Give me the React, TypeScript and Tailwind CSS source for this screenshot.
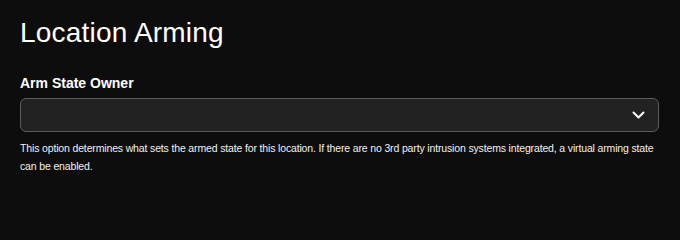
export default function App() {
  return (
    <div className="min-h-screen bg-[#0d0d0d] px-5 pt-4 text-white font-['Liberation_Sans',Arial,sans-serif]">
      <h1 className="text-[28px] leading-[34px] font-normal tracking-[0.2px]">Location Arming</h1>

      <div className="mt-[23px] w-[639px]">
        <label className="block text-[14px] leading-[20px] font-bold">Arm State Owner</label>
        <button
          type="button"
          className="mt-[5px] flex h-[34px] w-full items-center justify-end rounded-[6px] border border-[#5c5c5c] bg-[#222222] pr-[13px]"
        >
          <svg width="13" height="8" viewBox="0 0 13 8" fill="none">
            <path d="M1.5 1.5L6.5 6.5L11.5 1.5" stroke="#ffffff" strokeWidth="2" strokeLinecap="round" strokeLinejoin="round" />
          </svg>
        </button>
        <p className="mt-[8px] text-[10.5px] leading-[17.6px] tracking-[-0.15px] text-[#f2f2f2]">
          This option determines what sets the armed state for this location. If there are no 3rd party intrusion systems integrated, a virtual arming state can be enabled.
        </p>
      </div>
    </div>
  );
}
